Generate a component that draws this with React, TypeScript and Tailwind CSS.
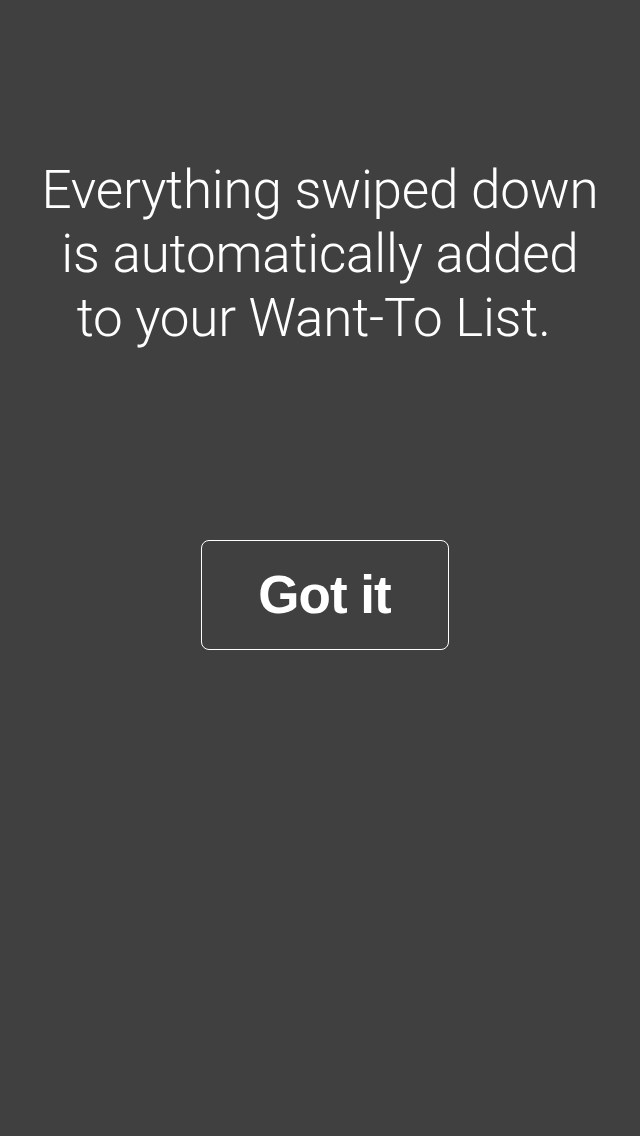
export default function App() {
  return (
    <div className="min-h-screen w-full bg-[#404040] flex flex-col items-center">
      <p className="mt-[158px] text-center text-white text-[53px] leading-[64px] font-light tracking-[-0.2px] font-['Roboto','Liberation_Sans',sans-serif]">
        Everything swiped down
        <br />
        is automatically added
        <br />
        to your Want-To List.{"\u00a0"}
      </p>
      <button className="mt-[190px] ml-[9px] w-[248px] h-[110px] border border-white rounded-[8px] text-white text-[53px] font-bold tracking-[-1px] flex items-center justify-center font-['Liberation_Sans',Arial,sans-serif]">
        Got it
      </button>
    </div>
  );
}
